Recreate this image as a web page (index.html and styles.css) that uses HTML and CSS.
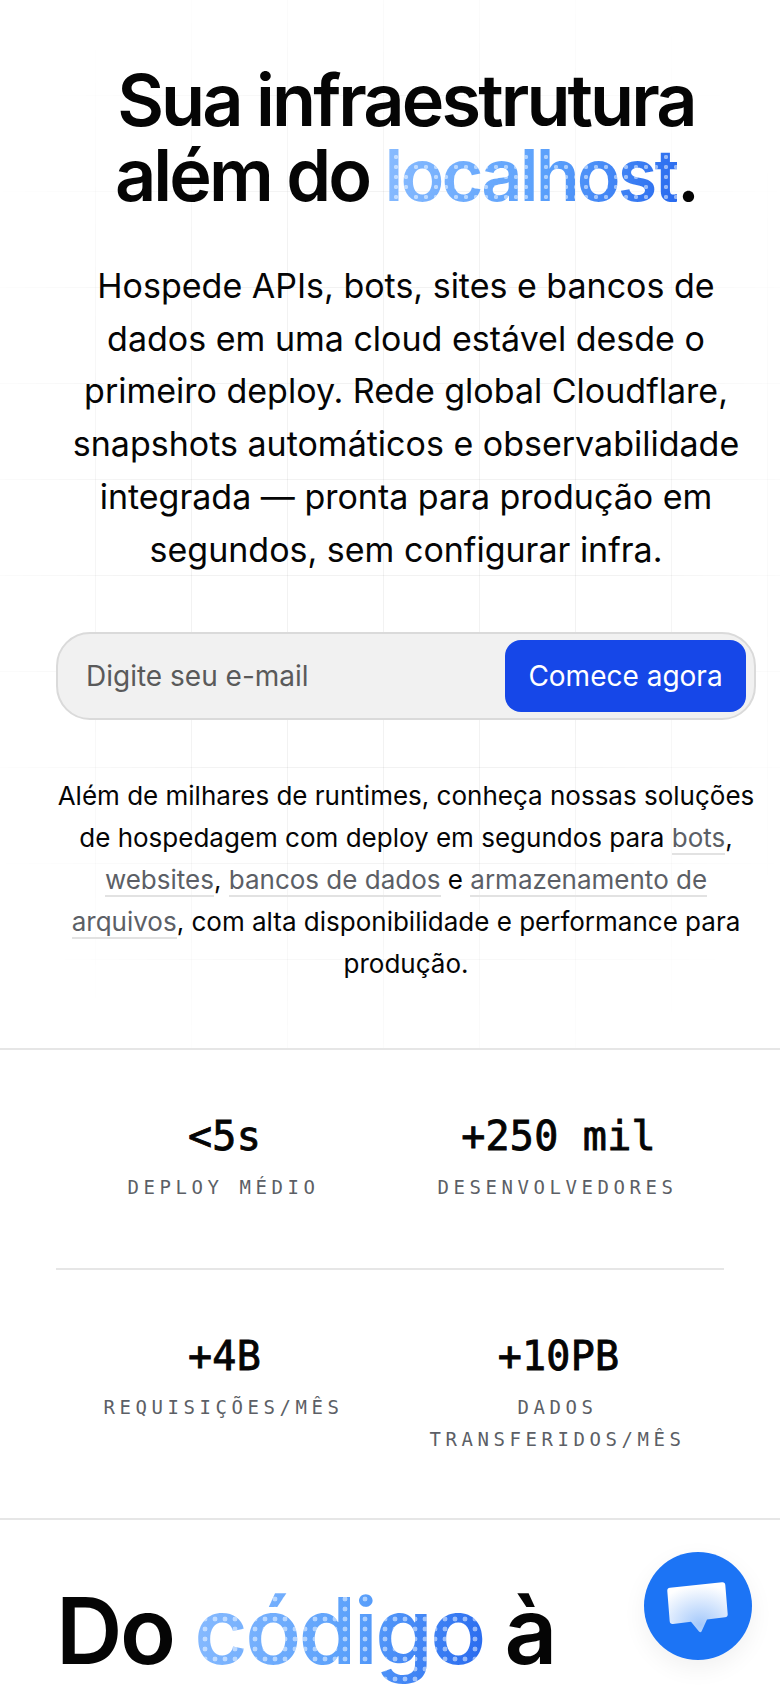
FILE: index.html
```html
<!DOCTYPE html>
<html lang="pt-BR">
<head>
<meta charset="utf-8">
<title>Sua infraestrutura além do localhost</title>
<link rel="stylesheet" href="styles.css">
</head>
<body>
<div class="page">
  <section class="hero">
    <div class="grid-bg"></div>
    <div class="hero-inner">
      <h1 class="hero-title">Sua infraestrutura<br>além do <span class="dotted dotted-hero">localhost</span>.</h1>
      <p class="hero-lead">Hospede APIs, bots, sites e bancos de dados em uma cloud estável desde o primeiro deploy. Rede global Cloudflare, snapshots automáticos e observabilidade integrada — pronta para produção em segundos, sem configurar infra.</p>
      <form class="signup">
        <span class="signup-placeholder">Digite seu e-mail</span>
        <button class="signup-button" type="button">Comece agora</button>
      </form>
      <p class="hero-note">Além de milhares de runtimes, conheça nossas soluções de hospedagem com deploy em segundos para <a class="note-link">bots</a>, <a class="note-link">websites</a>, <a class="note-link">bancos de dados</a> e <a class="note-link">armazenamento de arquivos</a>, com alta disponibilidade e performance para produção.</p>
    </div>
  </section>
  <section class="stats">
    <div class="stats-row">
      <div class="stat"><div class="stat-value">&lt;5s</div><div class="stat-label">DEPLOY MÉDIO</div></div>
      <div class="stat"><div class="stat-value">+250 mil</div><div class="stat-label">DESENVOLVEDORES</div></div>
    </div>
    <div class="stats-row stats-row-last">
      <div class="stat"><div class="stat-value">+4B</div><div class="stat-label">REQUISIÇÕES/MÊS</div></div>
      <div class="stat"><div class="stat-value">+10PB</div><div class="stat-label">DADOS TRANSFERIDOS/MÊS</div></div>
    </div>
  </section>
  <section class="next">
    <h2 class="next-title">Do <span class="dotted dotted-next">código</span> à</h2>
  </section>
</div>
<button class="chat" type="button" aria-label="Chat">
  <svg class="chat-icon" viewBox="0 0 62 56" width="62" height="56">
    <defs>
      <radialGradient id="bubble" cx="0.55" cy="0.85" r="0.8">
        <stop offset="0" stop-color="#a3c8fb"/>
        <stop offset="1" stop-color="#ffffff"/>
      </radialGradient>
    </defs>
    <path d="M3 9.7 L55 4.3 Q58 4 58.3 7 L60.7 36 Q61 39 58 39.3 L40 41.5 L34.5 53.5 Q33.5 55 32 53.5 L24 43.8 L6 46 Q3 46.3 2.7 43.3 L0.3 13 Q0 10 3 9.7 Z" fill="url(#bubble)"/>
  </svg>
</button>
</body>
</html>
```
FILE: styles.css
```css
html, body {
  margin: 0;
  padding: 0;
  background: #ffffff;
}
body {
  width: 780px;
  height: 1688px;
  overflow: hidden;
  position: relative;
  font-family: Inter, "Liberation Sans", sans-serif;
  color: #050505;
}
.page {
  display: flex;
  flex-direction: column;
}
.hero {
  position: relative;
  height: 1048px;
  padding: 62px 0 0 56px;
  box-sizing: border-box;
}
.grid-bg {
  position: absolute;
  inset: 0;
  background-image:
    linear-gradient(to right, rgba(0,0,0,.05) 1px, transparent 1px),
    linear-gradient(to bottom, rgba(0,0,0,.05) 1px, transparent 1px);
  background-size: 96px 96px;
  background-position: 95px 95px;
  -webkit-mask-image: radial-gradient(ellipse 60% 60% at 50% 50%, #000 50%, transparent 100%);
  mask-image: radial-gradient(ellipse 60% 60% at 50% 50%, #000 50%, transparent 100%);
}
.hero-inner {
  position: relative;
  width: 700px;
  display: flex;
  flex-direction: column;
  align-items: center;
  text-align: center;
}
.hero-title {
  margin: 0;
  font-size: 72px;
  font-weight: 600;
  line-height: 75px;
  letter-spacing: -2.88px;
}
.dotted {
  color: transparent;
  -webkit-text-fill-color: transparent;
  background-image:
    radial-gradient(circle at 5px 5px, rgba(255,255,255,.5) 1.9px, transparent 2.4px),
    linear-gradient(105deg, #8abcff 0%, #5aa0fb 55%, #2768ee 100%);
  background-size: 10px 10px, 100% 100%;
  -webkit-background-clip: text;
  background-clip: text;
}
.dotted-hero {
  background-position: -4px 1px, 0 0;
}
.dotted-next {
  background-image:
    radial-gradient(circle at 5px 5px, rgba(255,255,255,.5) 2.2px, transparent 2.7px),
    linear-gradient(105deg, #8abcff 0%, #5aa0fb 55%, #2768ee 100%);
  background-position: -4px -1px, 0 0;
}
.hero-lead {
  margin: 48px 0 0;
  font-size: 34px;
  line-height: 52.7px;
  font-weight: 400;
}
.signup {
  margin-top: 56px;
  box-sizing: border-box;
  width: 700px;
  height: 88px;
  display: flex;
  align-items: center;
  justify-content: space-between;
  padding: 0 8px 0 28px;
  background: #f1f1f1;
  border: 2px solid #dadada;
  border-radius: 34px;
}
.signup-placeholder {
  font-size: 28px;
  color: #5a5a5a;
}
.signup-button {
  width: 241px;
  height: 72px;
  border: 0;
  border-radius: 16px;
  background: #1647e8;
  color: #ffffff;
  font-family: inherit;
  font-size: 28px;
  font-weight: 400;
  padding: 0;
}
.hero-note {
  margin: 55px 0 0;
  font-size: 26px;
  line-height: 42px;
}
.note-link {
  color: #5c5f66;
  border-bottom: 2px solid #e2e2e2;
}
.stats {
  border-top: 2px solid #e6e6e6;
  border-bottom: 2px solid #e6e6e6;
  padding: 0 56px;
  box-sizing: border-box;
  height: 472px;
}
.stats-row {
  display: grid;
  grid-template-columns: 1fr 1fr;
  column-gap: 0;
  border-bottom: 2px solid #e6e6e6;
  height: 220px;
  box-sizing: border-box;
  padding-top: 62px;
}
.stats-row-last {
  border-bottom: 0;
  height: 248px;
}
.stat {
  display: flex;
  flex-direction: column;
  align-items: center;
  text-align: center;
  padding: 0 16px;
}
.stat-value {
  font-family: "DejaVu Sans Mono", monospace;
  font-size: 40px;
  line-height: 48px;
  font-weight: 400;
  letter-spacing: .25px;
  padding-left: 3px;
  -webkit-text-stroke: .9px #050505;
}
.stat-label {
  margin-top: 11px;
  padding-left: 1px;
  font-family: "DejaVu Sans Mono", monospace;
  font-size: 19px;
  line-height: 32px;
  letter-spacing: 4.55px;
  color: #5c5f66;
}
.next {
  padding: 61px 56px 0;
}
.next-title {
  margin: 0;
  font-size: 92px;
  line-height: 100px;
  font-weight: 600;
  letter-spacing: -2.5px;
}
.chat {
  position: fixed;
  left: 644px;
  top: 1552px;
  width: 108px;
  height: 108px;
  border: 0;
  padding: 0;
  border-radius: 50%;
  background: #1c74f5;
  box-shadow: 0 8px 24px rgba(0,0,0,.06);
  display: flex;
  align-items: center;
  justify-content: center;
}
.chat-icon {
  display: block;
}
```
